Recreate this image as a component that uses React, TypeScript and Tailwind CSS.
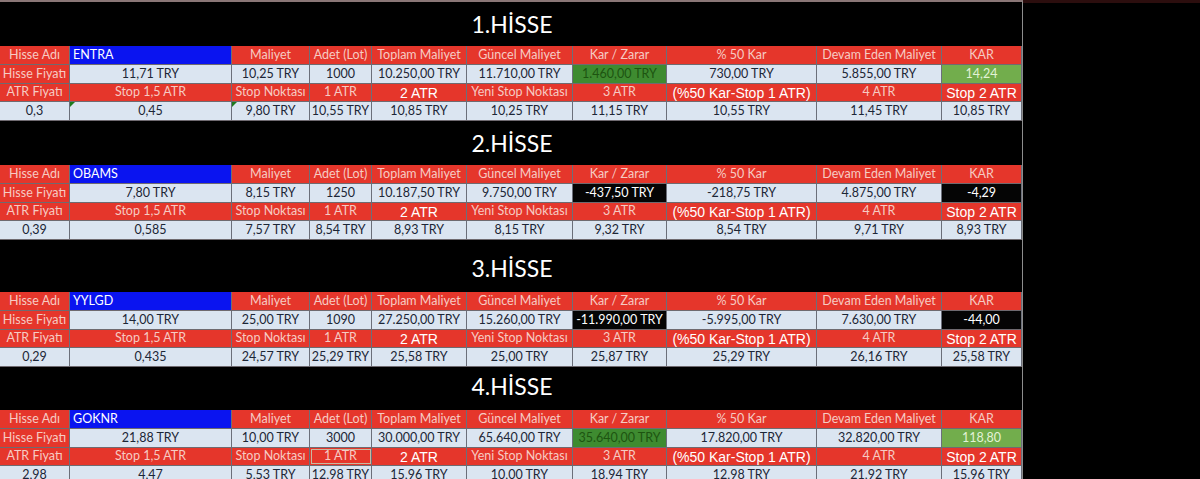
import React from 'react';

type Kind = 'label' | 'big' | 'val' | 'name' | 'pos' | 'kar' | 'neg';
type Cell = { t: string; k: Kind; mark?: boolean; sel?: boolean };

const widths = [70, 162, 78, 62, 95, 106, 94, 150, 125, 80];

const kindClass: Record<Kind, string> = {
  label: 'bg-[#e5362b] text-[#f6cbc3] justify-center text-[12.5px]',
  big: "bg-[#e5362b] text-white justify-center text-[14px] font-['Liberation_Sans',sans-serif]",
  val: 'bg-[#dbe5f1] text-[#1c2636] justify-center text-[12.5px]',
  name: 'bg-[#0a14f0] text-white justify-start pl-[3px] text-[12.5px]',
  pos: 'bg-[#3e8b30] text-[#1d5410] justify-center text-[12.5px]',
  kar: 'bg-[#72ad4c] text-[#e3f2d6] justify-center text-[12.5px]',
  neg: 'bg-[#050505] text-white justify-center text-[12.5px]',
};

type Block = {
  title: string;
  titleH: string;
  name: string;
  r2: string[];
  kz: string;
  kzNeg: boolean;
  r4: string[];
  marks?: boolean;
  sel?: boolean;
};

const blocks: Block[] = [
  {
    title: '1.HİSSE', titleH: 'h-[44px]', name: 'ENTRA',
    r2: ['11,71 TRY', '10,25 TRY', '1000', '10.250,00 TRY', '11.710,00 TRY', '1.460,00 TRY', '730,00 TRY', '5.855,00 TRY', '14,24'],
    kz: '', kzNeg: false,
    r4: ['0,3', '0,45', '9,80 TRY', '10,55 TRY', '10,85 TRY', '10,25 TRY', '11,15 TRY', '10,55 TRY', '11,45 TRY', '10,85 TRY'],
    marks: true,
  },
  {
    title: '2.HİSSE', titleH: 'h-[44px]', name: 'OBAMS',
    r2: ['7,80 TRY', '8,15 TRY', '1250', '10.187,50 TRY', '9.750,00 TRY', '-437,50 TRY', '-218,75 TRY', '4.875,00 TRY', '-4,29'],
    kz: '', kzNeg: true,
    r4: ['0,39', '0,585', '7,57 TRY', '8,54 TRY', '8,93 TRY', '8,15 TRY', '9,32 TRY', '8,54 TRY', '9,71 TRY', '8,93 TRY'],
  },
  {
    title: '3.HİSSE', titleH: 'h-[52px] pt-[4px]', name: 'YYLGD',
    r2: ['14,00 TRY', '25,00 TRY', '1090', '27.250,00 TRY', '15.260,00 TRY', '-11.990,00 TRY', '-5.995,00 TRY', '7.630,00 TRY', '-44,00'],
    kz: '', kzNeg: true,
    r4: ['0,29', '0,435', '24,57 TRY', '25,29 TRY', '25,58 TRY', '25,00 TRY', '25,87 TRY', '25,29 TRY', '26,16 TRY', '25,58 TRY'],
  },
  {
    title: '4.HİSSE', titleH: 'h-[43px] pb-[4px]', name: 'GOKNR',
    r2: ['21,88 TRY', '10,00 TRY', '3000', '30.000,00 TRY', '65.640,00 TRY', '35.640,00 TRY', '17.820,00 TRY', '32.820,00 TRY', '118,80'],
    kz: '', kzNeg: false,
    r4: ['2,98', '4,47', '5,53 TRY', '12,98 TRY', '15,96 TRY', '10,00 TRY', '18,94 TRY', '12,98 TRY', '21,92 TRY', '15,96 TRY'],
    sel: true,
  },
];

function rowsFor(b: Block): { h: string; cells: Cell[] }[] {
  const r1: Cell[] = [
    { t: 'Hisse Adı', k: 'label' }, { t: b.name, k: 'name' }, { t: 'Maliyet', k: 'label' },
    { t: 'Adet (Lot)', k: 'label' }, { t: 'Toplam Maliyet', k: 'label' }, { t: 'Güncel Maliyet', k: 'label' },
    { t: 'Kar / Zarar', k: 'label' }, { t: '% 50 Kar', k: 'label' }, { t: 'Devam Eden Maliyet', k: 'label' },
    { t: 'KAR', k: 'label' },
  ];
  const r2: Cell[] = [{ t: 'Hisse Fiyatı', k: 'label' }].concat(
    b.r2.map((t, i) => ({
      t,
      k: (i === 5 ? (b.kzNeg ? 'neg' : 'pos') : i === 8 ? (b.kzNeg ? 'neg' : 'kar') : 'val') as Kind,
    }))
  ) as Cell[];
  const r3: Cell[] = [
    { t: 'ATR Fiyatı', k: 'label' }, { t: 'Stop 1,5 ATR', k: 'label' }, { t: 'Stop Noktası', k: 'label' },
    { t: '1 ATR', k: 'label', sel: b.sel }, { t: '2 ATR', k: 'big' }, { t: 'Yeni Stop Noktası', k: 'label' },
    { t: '3 ATR', k: 'label' }, { t: '(%50 Kar-Stop 1 ATR)', k: 'big' }, { t: '4 ATR', k: 'label' },
    { t: 'Stop 2 ATR', k: 'big' },
  ];
  const r4: Cell[] = b.r4.map((t, i) => ({ t, k: 'val' as Kind, mark: b.marks && (i === 1 || i === 2) }));
  return [
    { h: 'h-[19px]', cells: r1 },
    { h: 'h-[19px]', cells: r2 },
    { h: 'h-[18px]', cells: r3 },
    { h: 'h-[19px]', cells: r4 },
  ];
}

function StockBlock({ b }: { b: Block }) {
  return (
    <div>
      <div className={`flex items-center justify-center text-white text-[23px] leading-none ${b.titleH}`}>
        <span className="pl-[2px]">{b.title}</span>
      </div>
      {rowsFor(b).map((row, ri) => (
        <div key={ri} className={`flex ${row.h} border-b border-[#6f6a70]`}>
          {row.cells.map((c, ci) => (
            <div
              key={ci}
              style={{ width: widths[ci] }}
              className={`relative flex items-center shrink-0 whitespace-nowrap overflow-hidden leading-none border-r border-[#6b6f7a] ${kindClass[c.k]} ${c.sel ? 'outline outline-1 -outline-offset-2 outline-[#c9b8a0]' : ''}`}
            >
              {c.mark && (
                <span className="absolute left-0 top-0 w-0 h-0 border-t-[5px] border-r-[5px] border-t-[#1e7a1e] border-r-transparent" />
              )}
              {c.t}
            </div>
          ))}
        </div>
      ))}
    </div>
  );
}

export default function App() {
  return (
    <div className="flex w-[1200px] h-[479px] overflow-hidden bg-black font-['Lato',sans-serif]">
      <div className="w-[1023px] shrink-0 border-t-[2px] border-r border-t-[#8a7676] border-r-[#8d8d8d]">
        {blocks.map((b, i) => (
          <StockBlock key={i} b={b} />
        ))}
      </div>
      <div className="flex-1 border-t-[3px] border-[#2c0e0e]" />
    </div>
  );
}
